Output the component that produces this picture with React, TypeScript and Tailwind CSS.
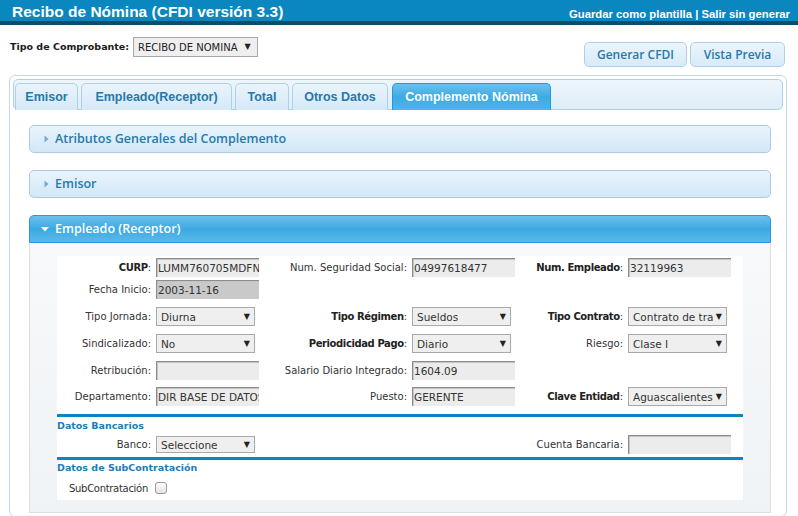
import React from 'react';

const cols = 'grid grid-cols-[94px_103px_143px_103px_103px_103px] gap-x-[5px] items-center';

function Label({ children, bold }: { children: string; bold?: boolean }) {
  return (
    <div className="truncate text-right text-[10px] leading-[12px] text-[#333]">
      {bold ? <span className="font-bold tracking-[-0.4px] text-[#222]">{children}</span> : children}:
    </div>
  );
}

function TextBox({ value = '', dark }: { value?: string; dark?: boolean }) {
  return (
    <div
      className={`h-[19px] w-[103px] overflow-hidden whitespace-nowrap border-t border-l border-[#8d8d8d] pl-[1px] pt-[1px] text-[10.5px] leading-[16px] text-[#333] shadow-[inset_1px_1px_0_#c4c4c4] ${
        dark ? 'bg-[#c9c9c9]' : 'bg-[#ececec]'
      }`}
    >
      {value}
    </div>
  );
}

function Select({ value, h = 'h-[19px]' }: { value: string; h?: string }) {
  return (
    <div className={`flex ${h} w-[99px] items-center border border-[#a9a9a9] bg-[#efefef] pl-[4px] pr-[4px] text-[10.5px] text-[#333]`}>
      <span className="min-w-0 flex-1 overflow-hidden whitespace-nowrap leading-[14px]">{value}</span>
      <span className="ml-[3px] text-[8px] leading-none text-[#222]">▼</span>
    </div>
  );
}

function Arrow({ open }: { open?: boolean }) {
  return open ? (
    <svg width="8" height="5" viewBox="0 0 8 5" className="mr-[6px]">
      <path d="M0 0 L8 0 L4 4.5 Z" fill="#ffffff" />
    </svg>
  ) : (
    <svg width="5" height="8" viewBox="0 0 5 8" className="mr-[6px]">
      <path d="M0.5 0.5 L4.5 4 L0.5 7.5 Z" fill="#7ea7c8" />
    </svg>
  );
}

function AccHeader({ title }: { title: string }) {
  return (
    <div className="flex h-[28px] items-center rounded-[5px] border border-[#aacbe7] bg-gradient-to-b from-[#eaf4fc] via-[#ddeefa] to-[#d3e7f7] pl-[14px] font-['Open_Sans',sans-serif] text-[12.5px] font-semibold text-[#2779aa]">
      <Arrow />
      {title}
    </div>
  );
}

const tabs = [
  { t: 'Emisor', w: 'w-[63px]' },
  { t: 'Empleado(Receptor)', w: 'w-[151px]' },
  { t: 'Total', w: 'w-[54px]' },
  { t: 'Otros Datos', w: 'w-[96px]' },
];

export default function App() {
  return (
    <div className="h-[516px] w-[798px] overflow-hidden bg-white font-['Liberation_Sans',Arial,sans-serif]">
      {/* top bar */}
      <div className="flex h-[25px] items-start justify-between border-b-[4px] border-[#0f4c6b] bg-[#0987be] pl-[12px] pr-[8px] pt-[3px] text-white">
        <div className="text-[15.5px] font-bold leading-[18px]">Recibo de Nómina (CFDI versión 3.3)</div>
        <div className="pt-[4px] text-[11.3px] font-bold leading-[14px]">Guardar como plantilla | Salir sin generar</div>
      </div>

      {/* comprobante row */}
      <div className="flex h-[50px] items-start justify-between pl-[10px] pr-[13px]">
        <div className="mt-[12px] flex items-center gap-[4px] font-['DejaVu_Sans',Verdana,sans-serif]">
          <span className="text-[9.5px] font-bold text-[#1a1a1a]">Tipo de Comprobante:</span>
          <div className="flex h-[20px] w-[125px] items-center border border-[#a9a9a9] bg-[#efefef] pl-[4px] text-[10px] text-[#222]">
            RECIBO DE NOMINA
            <span className="ml-[7px] text-[8px]">▼</span>
          </div>
        </div>
        <div className="mt-[17px] flex gap-[3px] font-['Open_Sans',sans-serif] text-[12px] font-semibold text-[#2779aa]">
          <div className="flex h-[25px] w-[103px] items-center justify-center rounded-[5px] border border-[#aed0ea] bg-gradient-to-b from-[#ecf5fc] to-[#d7ebf9]">
            Generar CFDI
          </div>
          <div className="flex h-[25px] w-[95px] items-center justify-center rounded-[5px] border border-[#aed0ea] bg-gradient-to-b from-[#ecf5fc] to-[#d7ebf9]">
            Vista Previa
          </div>
        </div>
      </div>

      {/* tabs container */}
      <div className="ml-[9px] w-[778px] rounded-[6px] border border-[#c5d9ea] p-[3px]">
        <div className="flex h-[31px] items-end gap-[3px] rounded-[5px] border border-[#aed0ea] bg-gradient-to-b from-[#eef6fc] to-[#deedf7] pl-[1px]">
          {tabs.map((tab) => (
            <div
              key={tab.t}
              className={`${tab.w} -mb-[1px] flex h-[27px] items-center justify-center rounded-t-[5px] border border-b-0 border-[#aed0ea] bg-gradient-to-b from-[#eaf4fc] to-[#d5e9f8] text-[12.5px] font-bold text-[#2779aa]`}
            >
              {tab.t}
            </div>
          ))}
          <div className="-mb-[1px] ml-[1px] flex h-[27px] w-[159px] items-center justify-center rounded-t-[5px] border border-b-0 border-[#2694e8] bg-gradient-to-b from-[#6cc0ec] via-[#3caae3] to-[#4fb4e8] text-[12.5px] font-bold text-white">
            Complemento Nómina
          </div>
        </div>

        {/* panel */}
        <div className="w-[758px] pl-[16px] pt-[15px]">
          <AccHeader title="Atributos Generales del Complemento" />
          <div className="mt-[17px]">
            <AccHeader title="Emisor" />
          </div>

          <div className="mt-[17px] w-[742px]">
            <div className="flex h-[28px] items-center rounded-t-[5px] border border-[#2694e8] bg-gradient-to-b from-[#6cc0ec] via-[#3ba9e2] to-[#5ab9ea] pl-[11px] font-['Open_Sans',sans-serif] text-[12.5px] font-semibold text-white">
              <Arrow open />
              Empleado (Receptor)
            </div>
            <div className="border border-t-0 border-[#dddddd] bg-gradient-to-b from-[#f7f9fa] to-[#f0f3f6] px-[27px] pb-[12px] pt-[13px]">
              <div className="bg-white pb-[5px] pt-[2px] font-['DejaVu_Sans',Verdana,sans-serif]">
                <div className={`${cols} h-[19px]`}>
                  <Label bold>CURP</Label>
                  <TextBox value="LUMM760705MDFN09" />
                  <Label>Num. Seguridad Social</Label>
                  <TextBox value="04997618477" />
                  <Label bold>Num. Empleado</Label>
                  <TextBox value="32119963" />
                </div>
                <div className={`${cols} mt-[3px] h-[19px]`}>
                  <Label>Fecha Inicio</Label>
                  <TextBox value="2003-11-16" dark />
                </div>
                <div className={`${cols} mt-[8px] h-[19px]`}>
                  <Label>Tipo Jornada</Label>
                  <Select value="Diurna" />
                  <Label bold>Tipo Régimen</Label>
                  <Select value="Sueldos" />
                  <Label bold>Tipo Contrato</Label>
                  <Select value="Contrato de trabajo" />
                </div>
                <div className={`${cols} mt-[8px] h-[19px]`}>
                  <Label>Sindicalizado</Label>
                  <Select value="No" />
                  <Label bold>Periodicidad Pago</Label>
                  <Select value="Diario" />
                  <Label>Riesgo</Label>
                  <Select value="Clase I" />
                </div>
                <div className={`${cols} mt-[8px] h-[19px]`}>
                  <Label>Retribución</Label>
                  <TextBox />
                  <Label>Salario Diario Integrado</Label>
                  <TextBox value="1604.09" />
                </div>
                <div className={`${cols} mt-[7px] h-[19px]`}>
                  <Label>Departamento</Label>
                  <TextBox value="DIR BASE DE DATOS" />
                  <Label>Puesto</Label>
                  <TextBox value="GERENTE" />
                  <Label bold>Clave Entidad</Label>
                  <Select value="Aguascalientes" />
                </div>

                <div className="mt-[8px] h-[3px] bg-[#0a87bf]" />
                <div className="h-[17px] pt-[2px] text-[9.5px] font-bold leading-[13px] text-[#1c7db6]">Datos Bancarios</div>
                <div className={`${cols} mt-[1px] h-[18px]`}>
                  <Label>Banco</Label>
                  <Select value="Seleccione" h="h-[17px]" />
                  <div />
                  <div />
                  <Label>Cuenta Bancaria</Label>
                  <TextBox />
                </div>
                <div className="mt-[4px] h-[3px] bg-[#0a87bf]" />
                <div className="h-[16px] pt-[1px] text-[9.5px] font-bold leading-[13px] text-[#1c7db6]">Datos de SubContratación</div>
                <div className="mt-[5px] flex h-[14px] items-center pl-[12px]">
                  <span className="text-[10px] tracking-[-0.3px] text-[#333]">SubContratación</span>
                  <div className="ml-[7px] h-[12px] w-[12px] rounded-[3px] border border-[#9a9a9a] bg-gradient-to-b from-[#fdfdfd] to-[#e3e3e3]" />
                </div>
              </div>
            </div>
          </div>
        </div>
      </div>
    </div>
  );
}
